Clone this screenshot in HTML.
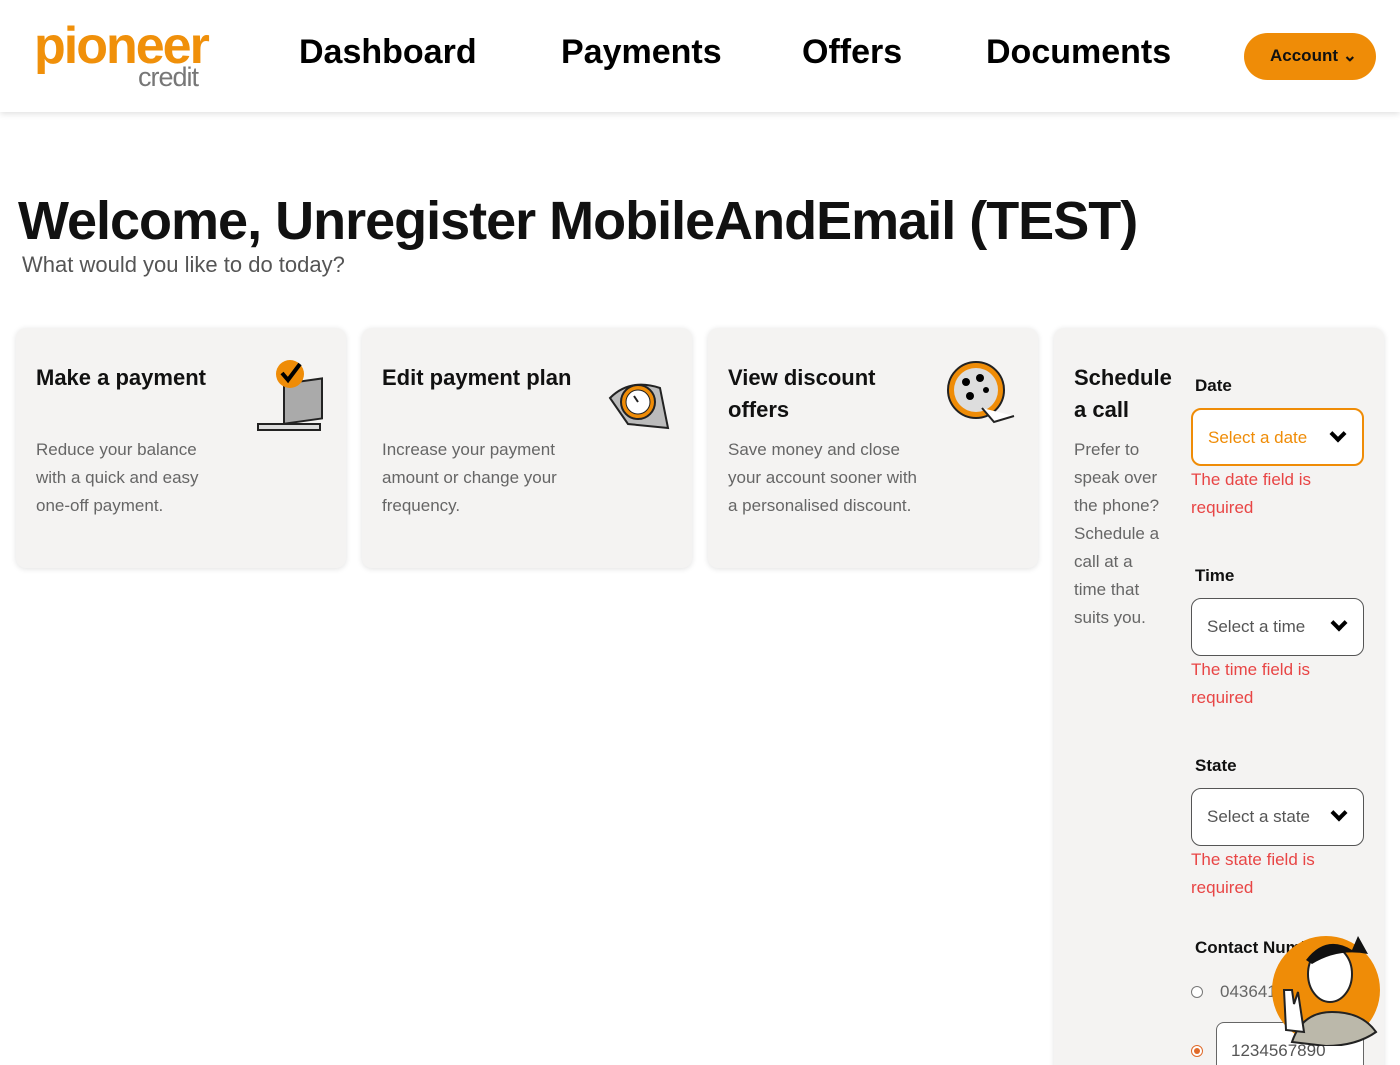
<!DOCTYPE html>
<html><head><meta charset="utf-8"><style>
*{box-sizing:border-box;margin:0;padding:0}
html,body{width:1400px;height:1065px;overflow:hidden}
body{background:#fff;font-family:"Liberation Sans",sans-serif;position:relative;color:#111}
.hdr{position:absolute;left:0;top:0;width:1400px;height:112px;background:#fff;box-shadow:0 2px 6px rgba(0,0,0,.12)}
.logo{position:absolute;left:34px;top:16px}
.logo .p{font-size:52px;font-weight:bold;color:#f0900a;letter-spacing:-2px;line-height:60px}
.logo .c{position:absolute;left:104px;top:46px;font-size:27px;color:#777;letter-spacing:-1px}
.nav{position:absolute;top:33px;font-size:34px;font-weight:bold;color:#000}
.acct{position:absolute;left:1244px;top:33px;width:132px;height:47px;border-radius:24px;background:#ef8c07;font-size:17px;font-weight:bold;color:#111;padding:13px 0 0 26px}
h1{position:absolute;left:18px;top:190px;font-size:54px;font-weight:bold;letter-spacing:-1px}
.sub{position:absolute;left:22px;top:252px;font-size:22px;color:#555}
.card{position:absolute;top:328px;width:330px;height:240px;background:#f4f3f2;border-radius:10px;box-shadow:0 1px 6px rgba(0,0,0,.12)}
.card h3{position:absolute;left:20px;top:34px;font-size:22px;font-weight:bold;line-height:32px;width:200px}
.card p{position:absolute;left:20px;top:108px;font-size:17px;color:#666;line-height:28px;width:210px}
.ic{position:absolute;right:18px;top:30px}
.sched{height:760px}
.lab{position:absolute;left:141px;font-size:17px;font-weight:bold}
.sel{position:absolute;left:137px;width:173px;height:58px;border:1px solid #555;border-radius:10px;background:#fff;font-size:17px;color:#555;padding:18px 0 0 15px}
.sel::after{content:"";position:absolute;right:18px;top:18px;width:8px;height:8px;border-right:4px solid #000;border-bottom:4px solid #000;transform:rotate(45deg) }
.err{position:absolute;left:137px;font-size:17px;color:#e84545;line-height:28px}
</style></head><body>
<div class="hdr">
<div class="logo"><div class="p">pioneer</div><div class="c">credit</div></div>
<div class="nav" style="left:299px">Dashboard</div>
<div class="nav" style="left:561px">Payments</div>
<div class="nav" style="left:802px">Offers</div>
<div class="nav" style="left:986px">Documents</div>
<div class="acct">Account ⌄</div>
</div>
<h1>Welcome, Unregister MobileAndEmail (TEST)</h1>
<div class="sub">What would you like to do today?</div>

<div class="card" style="left:16px"><h3>Make a payment</h3><p>Reduce your balance<br>with a quick and easy<br>one-off payment.</p>
<svg class="ic" width="74" height="76"><rect x="30" y="30" width="38" height="40" fill="#aaa" stroke="#222" stroke-width="2" transform="skewY(-8)"/><rect x="4" y="66" width="62" height="6" fill="#ddd" stroke="#222" stroke-width="2"/><circle cx="36" cy="16" r="14" fill="#ef8c07"/><path d="M28 15l6 7 12-16" stroke="#000" stroke-width="4" fill="none"/></svg></div>
<div class="card" style="left:362px"><h3>Edit payment plan</h3><p>Increase your payment<br>amount or change your<br>frequency.</p>
<svg class="ic" width="70" height="74"><path d="M6 40q20-20 50-10l8 40-40-4z" fill="#bbb" stroke="#222" stroke-width="2"/><circle cx="34" cy="44" r="17" fill="#ef8c07" stroke="#222" stroke-width="2"/><circle cx="34" cy="44" r="12" fill="#fff" stroke="#222"/><path d="M34 44l-4-6" stroke="#222" stroke-width="2"/></svg></div>
<div class="card" style="left:708px"><h3>View discount offers</h3><p style="width:240px">Save money and close<br>your account sooner with<br>a personalised discount.</p>
<svg class="ic" width="74" height="74"><circle cx="30" cy="32" r="28" fill="#ef8c07" stroke="#222" stroke-width="2"/><circle cx="30" cy="32" r="22" fill="#ddd"/><circle cx="20" cy="24" r="4"/><circle cx="34" cy="20" r="4"/><circle cx="24" cy="38" r="4"/><circle cx="40" cy="32" r="3"/><path d="M36 50l12 14 20-6" stroke="#222" stroke-width="2" fill="#fff"/></svg></div>

<div class="card sched" style="left:1054px">
<h3 style="width:110px">Schedule a call</h3>
<p style="width:110px">Prefer to<br>speak over<br>the phone?<br>Schedule a<br>call at a<br>time that<br>suits you.</p>
<div class="lab" style="top:48px">Date</div>
<div class="sel" style="top:80px;border:2px solid #ef8c07;color:#ef8c07">Select a date</div>
<div class="err" style="top:138px">The date field is<br>required</div>
<div class="lab" style="top:238px">Time</div>
<div class="sel" style="top:270px">Select a time</div>
<div class="err" style="top:328px">The time field is<br>required</div>
<div class="lab" style="top:428px">State</div>
<div class="sel" style="top:460px">Select a state</div>
<div class="err" style="top:518px">The state field is<br>required</div>
<div class="lab" style="top:610px">Contact Number</div>
<div style="position:absolute;left:137px;top:658px;width:12px;height:12px;border:1px solid #777;border-radius:50%;background:#fff"></div>
<div style="position:absolute;left:166px;top:654px;font-size:17px;color:#666">0436412345</div>
<div style="position:absolute;left:137px;top:717px;width:12px;height:12px;border:1.5px solid #e06a2a;border-radius:50%;background:#fff"><div style="margin:2px;width:6px;height:6px;border-radius:50%;background:#e06a2a"></div></div>
<div style="position:absolute;left:162px;top:694px;width:148px;height:60px;border:1px solid #666;border-radius:8px 8px 0 0;background:#fff;font-size:17px;color:#555;padding:18px 0 0 14px">1234567890</div>
</div>
<svg style="position:absolute;left:1272px;top:930px" width="112" height="116"><circle cx="54" cy="60" r="54" fill="#ef8c07"/><path d="M20 112q10-30 40-30t44 20q-20 14-50 14z" fill="#bbb8aa" stroke="#222" stroke-width="2"/><ellipse cx="58" cy="44" rx="22" ry="28" fill="#fff" stroke="#222" stroke-width="2"/><path d="M34 30q20-26 46-10l6-14 10 18q-30-6-56 10z" fill="#111"/><path d="M14 100l-2-40 8 0 2 14 4-12 6 40z" fill="#fff" stroke="#222" stroke-width="2"/></svg>
</body></html>
